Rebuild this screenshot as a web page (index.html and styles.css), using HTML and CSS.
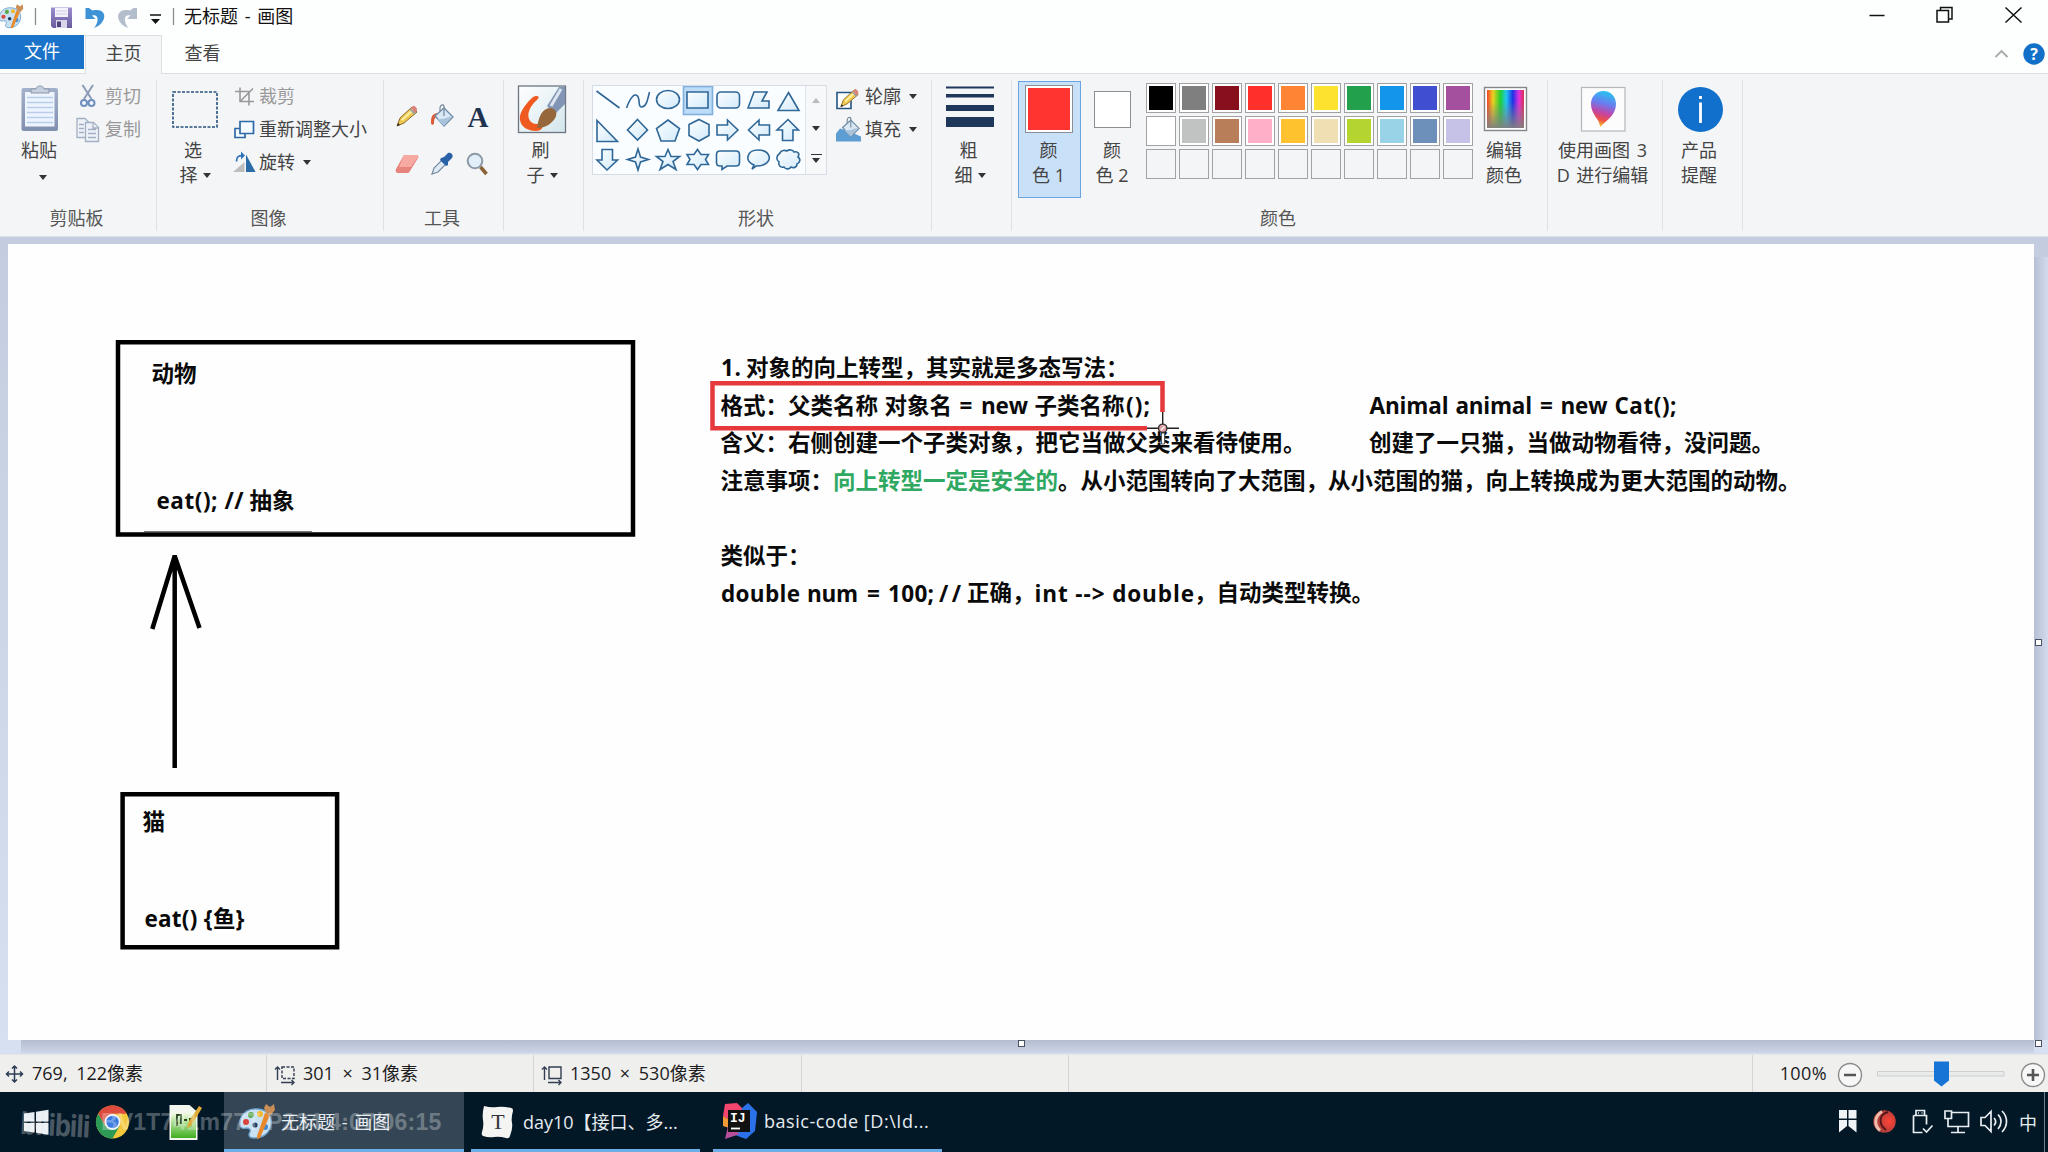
FILE: index.html
```html
<!DOCTYPE html>
<html lang="zh-CN">
<head>
<meta charset="utf-8">
<title>无标题 - 画图</title>
<link rel="stylesheet" href="styles.css">
</head>
<body>
<svg width="0" height="0" class="defs" aria-hidden="true">
  <defs>
    <linearGradient id="shapeFill" x1="0" y1="0" x2="1" y2="1"><stop offset="0" stop-color="#fbfeff"/><stop offset="1" stop-color="#d3eafa"/></linearGradient>
    <linearGradient id="board" x1="0" y1="0" x2="0" y2="1"><stop offset="0" stop-color="#a3b1cb"/><stop offset="1" stop-color="#7f8fae"/></linearGradient>
    <linearGradient id="rainbow"><stop offset="0" stop-color="#f0402c"/><stop offset=".16" stop-color="#f0d020"/><stop offset=".36" stop-color="#20d030"/><stop offset=".52" stop-color="#20c8f0"/><stop offset=".7" stop-color="#2030e8"/><stop offset=".86" stop-color="#e030e0"/><stop offset="1" stop-color="#e03050"/></linearGradient>
    <linearGradient id="toGray" x1="0" y1="0" x2="0" y2="1"><stop offset=".3" stop-color="#808080" stop-opacity="0"/><stop offset="1" stop-color="#808080" stop-opacity=".95"/></linearGradient>
    <linearGradient id="drop" x1=".6" y1="0" x2=".4" y2="1"><stop offset="0" stop-color="#25c5f0"/><stop offset=".35" stop-color="#6a7cf0"/><stop offset=".6" stop-color="#c046a8"/><stop offset=".8" stop-color="#ee4f4a"/><stop offset="1" stop-color="#f8c828"/></linearGradient>
    <linearGradient id="save" x1="0" y1="0" x2="0" y2="1"><stop offset="0" stop-color="#9b8fd0"/><stop offset="1" stop-color="#6a5a9c"/></linearGradient>
    <linearGradient id="npp" x1="0" y1="0" x2="0" y2="1"><stop offset="0" stop-color="#f2fbe0"/><stop offset="1" stop-color="#3fae1e"/></linearGradient>
    <linearGradient id="brushBg" x1="0" y1="0" x2="1" y2="1"><stop offset="0" stop-color="#fff"/><stop offset="1" stop-color="#d2e6ec"/></linearGradient>
    <radialGradient id="ball" cx=".7" cy=".5"><stop offset="0" stop-color="#ff4236"/><stop offset="1" stop-color="#b04038"/></radialGradient>
    <symbol id="palette" viewBox="0 0 38 38">
      <path d="M2 23C1 12 10 6 20 7c10 1 14 8 13 15-1 9-8 14-17 14-5 0-6-3-4-6 1-3-1-4-4-4-3 1-6 0-6-3z" fill="#c9e1f3" stroke="#6ea4cf" stroke-width="1.3"/>
      <circle cx="8" cy="20" r="3" fill="#d9453c"/><circle cx="13" cy="13" r="3" fill="#5aa749"/><circle cx="22" cy="12" r="3" fill="#f2b630"/><circle cx="17" cy="23" r="2.6" fill="#1e3c62"/><circle cx="27" cy="25" r="3" fill="#3f88d6"/>
      <path d="M27 11l5 2-10 23-3 1 0-3z" fill="#e8892c"/><path d="M28 2l4 3 4-3 1 6-4 5-5-2-2-5z" fill="#c98d55"/>
    </symbol>
    <symbol id="pencil" viewBox="0 0 24 24">
      <path d="M2 22l3-8L17 3l5 5L9 19z" fill="#efc94f" stroke="#8a6a34" stroke-width="1"/><path d="M7 16L19 5" stroke="#fff0a8" stroke-width="2"/><path d="M16 4l2-2c1-1 5 3 4 4l-2 3z" fill="#d9807a"/><path d="M15 5l5 5" stroke="#8d9bab" stroke-width="1.6"/><path d="M2 22l1-3 2 2z" fill="#222"/>
    </symbol>
    <symbol id="bucket" viewBox="0 0 24 24">
      <path d="M5 12L14 4l9 9-9 9z" fill="#d9e8f4" stroke="#6f8ba6" stroke-width="1.3"/><path d="M13 15l9-3-8 10-7-7z" fill="#a9c3dc"/><path d="M14 12V2c-1-2-4-1-4 2v3" fill="none" stroke="#73879a" stroke-width="1.2"/>
    </symbol>
  </defs>
</svg>

<header class="titlebar">
  <svg class="quick" width="180" height="35" viewBox="0 0 180 35">
    <use href="#palette" x="-2" y="3" width="26" height="26"/>
    <path d="M35.500 8v17M173.500 8v17" stroke="#8c8c8c" stroke-width="1.300"/>
    <path d="M51 7.500h21V28H53l-2-2z" fill="url(#save)"/><path d="M55 8h13v9H55z" fill="#f4f3fa"/><path d="M56 11h11M56 14h11" stroke="#cfcbe4"/><path d="M56 20h11v8H56z" fill="#d9d6ea"/><path d="M57 21.500h4V27h-4z" fill="#51447e"/>
    <path d="M85.500 8v11h10l-3.500-3.500c6-2 8 5 2 12.500C108 23 108 7 92.500 10.500L89 8z" fill="#3d93d5"/>
    <path d="M137 8v11h-10l3.500-3.500c-6-2-8 5-2 12.500C114 23 115 7 130 10.500L133.500 8z" fill="#b3bdcc"/>
    <path d="M150 15h11" stroke="#111" stroke-width="1.500"/><path d="M151 19h9l-4.500 5z" fill="#111"/>
  </svg>
  <span class="title">无标题 - 画图</span>
  <svg class="winctl" width="200" height="35" viewBox="1848 0 200 35" fill="none" stroke="#111" stroke-width="1.500">
    <path d="M1869.500 15.500h15"/><path d="M1937 10.500h11.500V22H1937z"/><path d="M1940.500 10V7.500H1952V19h-3"/><path d="M2005.500 7.500l16 15M2021.500 7.500l-16 15"/>
  </svg>
</header>

<nav class="tabs">
  <span class="tab file">文件</span>
  <span class="tab home">主页</span>
  <span class="tab view">查看</span>
  <svg class="help" width="60" height="38" viewBox="1988 35 60 38"><path d="M1995.500 57l6-6 6 6" fill="none" stroke="#a9a9a9" stroke-width="1.800"/><circle cx="2034" cy="54" r="10.700" fill="#1370c8"/><text x="2034" y="60" text-anchor="middle" class="q">?</text></svg>
</nav>

<section class="ribbon">
  <div class="group g-clip">
    <div class="body">
      <div class="big">
        <svg width="44" height="58" viewBox="18 80 44 58"><rect x="22.500" y="88" width="36.500" height="43" rx="2" fill="url(#board)"/><path d="M26 92h29.500v34.500H26z" fill="#edf4fd"/><path d="M28 97.500h26M28 102.500h26M28 107.500h26M28 112.500h26M28 117.500h26M28 122.500h26" stroke="#b9cdea" stroke-width="1.300"/><path d="M32 93v-4h5c0-4 8-4 8 0h5v4z" fill="#c6cfdb" stroke="#8b98ae"/></svg>
        <span>粘贴</span><i class="caret"></i>
      </div>
      <div class="col">
        <div class="row off"><svg width="29" height="33" viewBox="76 80.500 29 33"><path d="M82.500 85.500l9 14M93 85.500l-9 14" stroke="#8a9cb8" stroke-width="2"/><circle cx="84" cy="103.500" r="3" fill="none" stroke="#6f8fc0" stroke-width="2"/><circle cx="91.500" cy="103.500" r="3" fill="none" stroke="#6f8fc0" stroke-width="2"/></svg>剪切</div>
        <div class="row off"><svg width="29" height="33" viewBox="76 113.500 29 33" fill="#eef2f8" stroke="#a3b0c4" stroke-width="1.300"><path d="M77 119h8l4 4v15H77z"/><path d="M79 125h5M79 129h5M79 133h5"/><path d="M85.500 123h8l5 5v14h-13z"/><path d="M88 130h8M88 134h8M88 138h8M93 123.500v5h5"/></svg>复制</div>
      </div>
    </div>
    <div class="label">剪贴板</div>
  </div>

  <div class="group g-image">
    <div class="body">
      <div class="big">
        <svg width="50" height="58" viewBox="170.500 80 50 58"><path d="M173.500 92h44v35h-44z" fill="none" stroke="#26507e" stroke-width="1.600" stroke-dasharray="3 1.500"/></svg>
        <span>选</span><span>择<i class="caret"></i></span>
      </div>
      <div class="col">
        <div class="row off"><svg width="27" height="33" viewBox="232 80.500 27 33" fill="none" stroke="#999" stroke-width="1.600"><path d="M235 92h14v14M240 88v14h14M240 102l13-13"/></svg>裁剪</div>
        <div class="row"><svg width="27" height="33" viewBox="232 113.500 27 33" fill="#f4faff" stroke="#2d69a5" stroke-width="1.700"><path d="M235 129h10v9h-10z"/><path d="M240 122h13.500v12H240z"/></svg>重新调整大小</div>
        <div class="row"><svg width="27" height="33" viewBox="232 146.500 27 33"><path d="M233 172.500h11.500v-10z" fill="#bdbdbd"/><path d="M246 172.500h9.500L246 155z" fill="#2b6ca8"/><path d="M236.500 162c0-5 2-6 6-6" fill="none" stroke="#2f74bb" stroke-width="1.800"/><path d="M241 152l4 4-4 4z" fill="#2f74bb"/></svg>旋转<i class="caret"></i></div>
      </div>
    </div>
    <div class="label">图像</div>
  </div>

  <div class="group g-tools">
    <div class="toolgrid">
      <svg viewBox="0 0 24 24"><use href="#pencil"/></svg>
      <svg viewBox="0 0 24 24"><path d="M1 19c0-6 1-9 6-10l2 2-4 3c-1 2-1 4-1 6-1 1-3 1-3-1z" fill="#dd5a38"/><use href="#bucket"/></svg>
      <svg viewBox="0 0 24 24"><text x="13" y="22.500" text-anchor="middle" class="bigA">A</text></svg>
      <svg viewBox="0 0 24 24"><path d="M1 17L9 3h12c2 0 3 1 2 3l-8 13c-1 2-2 2-3 2H3c-2 0-3-2-2-4z" fill="#e5837c"/><path d="M9 3h12c2 0 2 1 2 2l-7 10H4z" fill="#f6aaa2"/></svg>
      <svg viewBox="0 0 24 24"><path d="M2 22l2-6 9-9 4 4-9 9z" fill="#dfeaf4" stroke="#778ba2" stroke-width="1.200"/><path d="M11 6l3-1 4-4c3-1 6 2 4 5l-4 4v3l-2 1-6-6z" fill="#2a62a8"/></svg>
      <svg viewBox="0 0 24 24"><circle cx="10" cy="9" r="7.300" fill="#e1effb" stroke="#8c98a6" stroke-width="2"/><path d="M15.500 15l6 7" stroke="#8a6237" stroke-width="3.500"/></svg>
    </div>
    <div class="label">工具</div>
  </div>

  <div class="group g-brush">
    <div class="body">
      <div class="big">
        <svg width="50" height="58" viewBox="517 80 50 58"><rect x="518.500" y="86" width="47" height="46.500" fill="url(#brushBg)" stroke="#6d7680" stroke-width="1.300"/><path d="M537 96c-4 0-5 2-9 6-5 6-9 12-8 18 1 7 8 11 16 11 6 0 8-4 5-8-4 2-10 1-12-4-2-6 1-13 8-19l2-3z" fill="#ef5a20"/><path d="M547 106l12-19h6v17l-10 10z" fill="#8295b4"/><path d="M551 106l10-17" stroke="#dce5f0" stroke-width="3"/><path d="M537 128c2-12 5-20 14-20 7 1 7 9 1 14-4 4-9 6-15 6z" fill="#95673a"/></svg>
        <span>刷</span><span>子<i class="caret"></i></span>
      </div>
    </div>
    <div class="label"></div>
  </div>

  <div class="group g-shapes">
    <div class="body">
      <div class="gallery">
        <svg width="212" height="88" viewBox="593 86 212 88" fill="url(#shapeFill)" stroke="#2f6797" stroke-width="1.600">
          <rect x="683.500" y="86.500" width="29" height="28" fill="#bcdcf8" stroke="#7fb0de"/>
          <path d="M596.500 91l23 17"/><path fill="none" d="M626.500 108c4-11 8-15 11-12 3 3 0 11 4 11 5 0 6-7 8-15"/>
          <ellipse cx="668" cy="99.500" rx="11.500" ry="9"/><path d="M687 92h21v16h-21z"/><rect x="717" y="92" width="22.500" height="16" rx="4"/><path d="M748 108l6-16h13l-5 9h7v7z"/><path d="M788.500 92.500l10.500 18h-21z"/>
          <path d="M597 120.500v21h20.500z"/><path d="M637.500 119.500l10 10.500-10 10-10-10z"/><path d="M668 120l11.500 8.500-4.500 12.500h-14l-4.500-12.500z"/><path d="M699 119.500l10 5v11l-10 5.500-10-5.500v-11z"/><path d="M717 125h10.500v-5L738 130l-10.500 10v-5H717z"/><path d="M769.500 125H759v-5l-10.500 10L759 140v-5h10.500z"/><path d="M788 119.500l10.500 10.500H793v10.500h-10.500V130H777z"/>
          <path d="M602 149.500h10.500V160h5L607 170l-10-10h5z"/><path d="M638 149l2.500 8 8 2.500-8 2.500-2.500 8-2.500-8-8-2.500 8-2.500z"/><path d="M668 149.500l3 7h8.500l-6.500 5 3 8-8-5-8 5 3-8-6.500-5h8.500z"/><path d="M697.500 149.500l3.500 5h7.500l-3 5 3 5H701l-3.500 5-3.500-5h-7l3-5-3-5h7z"/>
          <path d="M720 151h16q3.500 0 3.500 3.500v8q0 3.500-3.500 3.500h-9l-5 3.500V166h-2q-3.500 0-3.500-3.500v-8q0-3.500 3.500-3.500z"/><path d="M754 165c-10-4-7-15 4-15s15 9 7 14c-3 2-6 2-9 2l-4 3z"/>
          <path d="M780 153c1-3 5-3 7-2 2-2 6-1 7 1 4-1 6 2 4 5 3 2 2 6-1 7 0 4-4 4-6 3-2 3-6 2-7 0-4 1-6-2-5-5-3-2-3-6 1-9z"/>
        </svg>
        <div class="scroll"><i class="up"></i><i class="caret"></i><i class="more"></i></div>
      </div>
      <div class="col">
        <div class="row"><svg width="29" height="33" viewBox="836 80.500 29 33"><path d="M837 93h14v16h-14z" fill="#fff" stroke="#245482" stroke-width="1.600"/><use href="#pencil" x="839" y="88" width="21" height="21"/></svg>轮廓<i class="caret"></i></div>
        <div class="row"><svg width="29" height="33" viewBox="836 113.500 29 33"><path d="M836 142v-8l4-5 6 2 8 3 7 3v5z" fill="#5c9dd3"/><use href="#bucket" x="838" y="117" width="22" height="22"/></svg>填充<i class="caret"></i></div>
      </div>
    </div>
    <div class="label">形状</div>
  </div>

  <div class="group g-size">
    <div class="body">
      <div class="big">
        <svg width="50" height="58" viewBox="945 80 50 58" fill="#20375c"><path d="M946 86.500h48v2h-48zM946 94h48v3.500h-48zM946 105h48v6h-48zM946 117h48v10h-48z"/></svg>
        <span>粗</span><span>细<i class="caret"></i></span>
      </div>
    </div>
    <div class="label"></div>
  </div>

  <div class="group g-color">
    <div class="body">
      <div class="big color1"><div class="chip"><b></b></div><span>颜</span><span>色 1</span></div>
      <div class="big color2"><div class="chip"><b></b></div><span>颜</span><span>色 2</span></div>
      <div class="palette">
        <i class="k1"></i><i class="k2"></i><i class="k3"></i><i class="k4"></i><i class="k5"></i><i class="k6"></i><i class="k7"></i><i class="k8"></i><i class="k9"></i><i class="k10"></i>
        <i class="k11"></i><i class="k12"></i><i class="k13"></i><i class="k14"></i><i class="k15"></i><i class="k16"></i><i class="k17"></i><i class="k18"></i><i class="k19"></i><i class="k20"></i>
        <i class="none"></i><i class="none"></i><i class="none"></i><i class="none"></i><i class="none"></i><i class="none"></i><i class="none"></i><i class="none"></i><i class="none"></i><i class="none"></i>
      </div>
      <div class="big edit">
        <svg width="46" height="58" viewBox="1482 80 46 58"><rect x="1484.500" y="87.500" width="42" height="43" fill="#fff" stroke="#858585" stroke-width="1.400"/><path d="M1487 90h37v38h-37z" fill="url(#rainbow)"/><path d="M1487 90h37v38h-37z" fill="url(#toGray)"/></svg>
        <span>编辑</span><span>颜色</span>
      </div>
    </div>
    <div class="label">颜色</div>
  </div>

  <div class="group g-3d">
    <div class="body">
      <div class="big">
        <svg width="46" height="58" viewBox="1580 80 46 58"><rect x="1581.500" y="87.500" width="43.500" height="43.500" fill="#fcfcfd" stroke="#b4b6ba" stroke-width="1.200"/><path d="M1600 127c0-8-9-12-9-23 0-7 5-13 12.500-13s12.500 6 12.500 13c0 11-9 16-16 23z" fill="url(#drop)"/></svg>
        <span>使用画图 3</span><span>D 进行编辑</span>
      </div>
    </div>
    <div class="label"></div>
  </div>

  <div class="group g-info">
    <div class="body">
      <div class="big">
        <svg width="48" height="58" viewBox="1676.500 80 48 58"><circle cx="1701" cy="109.500" r="22.500" fill="#1170cc"/><path d="M1701 102.500v20.500M1701 96v3" stroke="#fff" stroke-width="2.800"/></svg>
        <span>产品</span><span>提醒</span>
      </div>
    </div>
    <div class="label"></div>
  </div>
</section>

<main class="workarea">
  <div class="paper">
    <svg width="2026" height="796" viewBox="8 244 2026 796" class="drawing">
      <g fill="none" stroke="#000" stroke-width="4.500">
        <path d="M118 342.300h515v192.200H118z"/><path d="M122.600 794.300h214.500v153H122.600z"/>
        <path d="M174.700 555v213M152.300 629l22.400-73M199.500 628l-24.800-72"/>
      </g>
      <path d="M144 531.500h168" stroke="#777" stroke-width="1"/>
      <text x="151.500" y="382">动物</text>
      <text x="156.500" y="508.500" textLength="87">eat(); //</text><text x="249.500" y="508.500">抽象</text>
      <text x="142.500" y="830">猫</text>
      <text x="144.500" y="927" textLength="68">eat() {</text><text x="213" y="927">鱼</text><text x="235.500" y="927">}</text>

      <text x="721" y="376" textLength="20">1.</text><text x="746" y="376">对象的向上转型，其实就是多态写法：</text>
      <text x="720.500" y="413.500">格式：父类名称</text><text x="884.500" y="413.500">对象名</text><text x="959.500" y="414" textLength="15">=</text><text x="981" y="414" textLength="47">new</text><text x="1034.500" y="413.500">子类名称</text><text x="1126" y="414" textLength="24">();</text>
      <text x="720.500" y="451">含义：右侧创建一个子类对象，把它当做父类来看待使用。</text>
      <text x="720.500" y="488.500">注意事项：<tspan class="green">向上转型一定是安全的</tspan>。从小范围转向了大范围，从小范围的猫，向上转换成为更大范围的动物。</text>
      <text x="720.500" y="563.500">类似于：</text>
      <text x="721" y="601.500" textLength="79">double</text><text x="807" y="601.500" textLength="51">num</text><text x="867" y="601.500" textLength="13">=</text><text x="888" y="601.500" textLength="46">100;</text><text x="939" y="601.500" textLength="22">//</text><text x="967" y="601">正确，</text><text x="1034.500" y="601.500" textLength="159.500">int --&gt; double</text><text x="1194" y="601">，自动类型转换。</text>
      <text x="1369.500" y="414" textLength="79">Animal</text><text x="1455.500" y="414" textLength="76.500">animal</text><text x="1540" y="414" textLength="13">=</text><text x="1560.500" y="414" textLength="47">new</text><text x="1614.500" y="414" textLength="62">Cat();</text>
      <text x="1369" y="451">创建了一只猫，当做动物看待，没问题。</text>

      <path d="M1147 428.300H712.500V383.300h450V412" fill="none" stroke="#e5393c" stroke-width="4.500"/>
      <path d="M1162.700 412v12M1147 428.300h11M1167 428.300h12" stroke="#222" stroke-width="1.400"/>
      <path d="M1161.500 433v11h3v-11z" fill="#fff" stroke="#555" stroke-width="1"/>
      <circle cx="1162.700" cy="428.300" r="4.200" fill="#e0a0a6" stroke="#333" stroke-width="1.400"/><path d="M1161 430l3.500-3.500" stroke="#fff" stroke-width="1.300"/>
    </svg>
  </div>
  <i class="shade-right"></i><i class="shade-bottom"></i>
  <i class="handle h-right"></i><i class="handle h-bottom"></i><i class="handle h-corner"></i>
</main>

<footer class="status">
  <div class="cell s1"><svg width="20" height="38" viewBox="4 1054 20 38" fill="none" stroke="#2b3b55" stroke-width="1.500"><path d="M6.500 1073h16M14.500 1065v16M9 1070.500l-2.500 2.500 2.500 2.500M20 1070.500l2.500 2.500-2.500 2.500M12 1067.500l2.500-2.500 2.500 2.500M12 1078.500l2.500 2.500 2.500-2.500"/></svg><span>769, 122像素</span></div>
  <div class="cell s2"><svg width="22" height="38" viewBox="274 1054 22 38" fill="none" stroke="#333f52" stroke-width="1.400"><path d="M277.500 1079v-13M275 1068.500l2.500-2.500 2.500 2.500M281 1081.500h13M291.500 1079l2.500 2.500-2.500 2.500"/><path d="M282 1066h12v11.500h-12z" stroke-dasharray="3 1.500"/></svg><span>301 × 31像素</span></div>
  <div class="cell s3"><svg width="22" height="38" viewBox="541 1054 22 38" fill="none" stroke="#333f52" stroke-width="1.400"><path d="M544.500 1079v-13M542 1068.500l2.500-2.500 2.500 2.500M548 1081.500h13M558.500 1079l2.500 2.500-2.500 2.500"/><path d="M549 1066h12v11.500h-12z"/></svg><span>1350 × 530像素</span></div>
  <div class="cell s4"></div>
  <div class="cell s5"></div>
  <div class="zoom"><span>100%</span>
    <svg width="215" height="38" viewBox="1833 1054 215 38"><g fill="#f7f7f7" stroke="#8b8b8b" stroke-width="1.400"><circle cx="1850" cy="1074" r="11.500"/><circle cx="2033" cy="1074" r="11.500"/></g><path d="M1844 1074h12M2027 1074h12M2033 1068v12" stroke="#555" stroke-width="2.600"/><path d="M1877.500 1070.500h126.500v4.500h-126.500z" fill="#e9eaea" stroke="#cdcfd0"/><path d="M1934 1060.500h15v19l-7.500 6-7.500-6z" fill="#1674d6"/></svg>
  </div>
</footer>

<div class="taskbar">
  <div class="pins">
    <svg width="224" height="60" viewBox="0 1092 224 60">
      <path d="M24 1113.500l10.500-1.600v9.600H24zM36 1111.700l12.500-2v11.800H36zM24 1123h10.500v9.600L24 1131zM36 1123h12.500v11.700l-12.500-2z" fill="#e9eef2"/>
      <circle cx="112.500" cy="1122" r="16.500" fill="#f3c83a"/><path d="M98.200 1113.700A16.500 16.500 0 0 1 126.800 1113.700H112.500L105.300 1126z" fill="#dd4b3e"/><path d="M98.200 1113.700A16.500 16.500 0 0 0 112.500 1138.500L119.700 1126H105.300z" fill="#2d9a55"/><circle cx="112.500" cy="1122" r="8" fill="#f1f3f5"/><circle cx="112.500" cy="1122" r="6.200" fill="#3a7be0"/>
      <path d="M169.500 1105h20l8 7v28h-28z" fill="#f3f6ee"/><path d="M171 1113h25v25h-25z" fill="url(#npp)"/><path d="M177 1126v-11h4v9M184 1120h3M190 1118v4" stroke="#264218" stroke-width="1.800" fill="none"/><path d="M187 1128l2-7 10-15 3 2-11 18z" fill="#e0ab35"/>
    </svg>
  </div>
  <div class="task active"><svg width="38" height="38"><use href="#palette" width="38" height="38"/></svg><span>无标题 - 画图</span></div>
  <div class="task t2"><svg width="36" height="38" viewBox="0 0 36 38"><path d="M3 4q7 2 13 1t14 1q2 0 2 3-2 7-1 12t-2 13q-1 3-4 2-7-2-12-1t-11-1q-2-1-1-4 2-6 1-12t1-14z" fill="#f4f4f3"/><text x="17" y="27" text-anchor="middle" class="typ">T</text></svg><span>day10【接口、多...</span></div>
  <div class="task t3"><svg width="38" height="38" viewBox="0 0 38 38"><path d="M4 2l12-1 7 7-9 14-12-8z" fill="#f3456e"/><path d="M21 6l6-5 9 9-2 19-9 8-11-4z" fill="#2b72ea"/><path d="M2 14l8 5 1 8-9-3z" fill="#f19a35"/><path d="M4 37l3-13 12 8z" fill="#b74f9d"/><path d="M7 8h22v22H7z" fill="#111"/><text x="9" y="20" class="ij">IJ</text><path d="M10 26.500h9" stroke="#fff" stroke-width="1.800"/></svg><span>basic-code [D:\Id...</span></div>
  <div class="tray">
    <svg width="180" height="60" viewBox="1832 1092 180 60" fill="none" stroke="#e8edf2" stroke-width="1.700">
      <path d="M1839 1110h8v8.500h-8zM1848.500 1110h8v8.500h-8zM1839 1120h8v6l-8 6.500zM1848.500 1120h8v12.500l-8-6.500z" fill="#f0f3f5" stroke="none"/>
      <circle cx="1884.500" cy="1121.500" r="11.200" fill="url(#ball)" stroke="none"/><path d="M1888 1112c-9 2-10 12-2 18" stroke="#54161a" stroke-width="1.800"/><path d="M1882 1111.500c-8 5-8 14-2 19" stroke="#f0bcae" stroke-width="3"/>
      <path d="M1916 1115v-4.500h8.500v4.500M1913.500 1115.500h13v9M1913.500 1115.500v17h9M1918 1113h1M1921.500 1113h1M1923 1128.500l3.500 3.500 6-6.500"/>
      <path d="M1952 1112.500h16.500v14H1948v-6M1958 1127v5M1951 1132.500h14M1945 1111h6.500v7.500h-6.500zM1948 1118v3"/>
      <path d="M1981 1117.500h4l6-6v20l-6-6h-4zM1994 1118c2 2 2 5 0 7.500M1998 1114.500c4 4 4 10 0 14.500M2002 1111c6 6 6 15 0 21"/>
    </svg>
    <span class="ime">中</span><i class="desk"></i>
  </div>
  <div class="watermark"><span class="logo">bilibili</span><span class="code">BV1T741m77T P234 4:07/06:15</span></div>
</div>
</body>
</html>
```

FILE: styles.css
```css
* { box-sizing: border-box; }
body { margin: 0; width: 2048px; height: 1152px; overflow: hidden; display: flex; flex-direction: column; background: #fdfefe; color: #444; font: 18px "Open Sans", "Noto Sans CJK SC", sans-serif; }
svg { display: block; flex: none; }
i { font-style: normal; }
.defs { position: absolute; }

.titlebar { height: 35px; flex: none; display: flex; align-items: center; }
.title { margin-left: 4px; color: #111; line-height: 32px; padding-bottom: 3px; white-space: nowrap; word-spacing: 2px; }
.winctl { margin-left: auto; }

.tabs { height: 39px; flex: none; display: flex; border-bottom: 1px solid #dcdee0; line-height: 34px; }
.tab { height: 39px; text-align: center; }
.file { width: 84px; height: 34px; background: #1a73c9; color: #fff; line-height: 33px; }
.home { width: 77px; margin-left: 1px; background: #f5f6f7; border: 1px solid #dcdee0; border-bottom: 0; line-height: 34px; }
.view { width: 81px; line-height: 36px; }
.help { margin-left: auto; }
.q { font: bold 16px "Open Sans", sans-serif; fill: #fff; }

.ribbon { height: 163px; flex: none; display: flex; background: #f4f5f7; border-bottom: 1px solid #dfe2e8; }
.group { margin: 6px 0 6px; height: 151px; border-right: 1px solid #dfe1e4; display: flex; flex-direction: column; justify-content: space-between; }
.body { display: flex; height: 120px; }
.label { height: 26px; line-height: 26px; text-align: center; color: #555; padding-right: 3px; }
.big { display: flex; flex-direction: column; align-items: center; white-space: nowrap; line-height: 25px; }
.big span { height: 25px; display: flex; align-items: center; gap: 5px; white-space: pre; }
.row { height: 33px; line-height: 33px; display: flex; align-items: center; white-space: nowrap; }
.row .caret { margin-left: 8px; }
.off { color: #999; }
.caret { width: 0; height: 0; flex: none; border: 4px solid transparent; border-top: 5px solid #333; border-bottom: 0; }

.g-clip { width: 157px; }
.g-clip .body { padding-left: 17px; }
.g-clip .big > .caret { margin: 12px 0 0 8px; }
.g-clip .col { margin-left: 15px; }
.g-image { width: 227px; }
.g-image .body { padding-left: 13px; }
.g-image .big { width: 50px; }
.g-image .big span:nth-of-type(1) { margin-right: 4px; }
.g-image .col { margin-left: 12px; }
.g-tools { width: 120px; }
.toolgrid { display: grid; grid-template-columns: repeat(3, 24px); gap: 24px 11px; padding: 24px 0 0 11px; }
.toolgrid svg { overflow: visible; }
.bigA { font: bold 29px "Liberation Serif", serif; fill: #1f3350; }
.g-brush { width: 80px; }
.g-brush .body { padding-left: 13px; }
.g-brush .big span:nth-of-type(1), .g-size .big span:nth-of-type(1) { margin-right: 3px; }
.g-shapes { width: 348px; }
.g-shapes .body { padding-left: 8px; }
.gallery { display: flex; width: 235px; height: 90px; margin-top: 5px; border: 1px solid #d5dce5; background: #fafdff; }
.scroll { width: 21px; border-left: 1px solid #e0e4ea; background: #f7f8fa; display: flex; flex-direction: column; align-items: center; justify-content: space-between; padding: 12px 0 11px; }
.up { border: 4px solid transparent; border-top: 0; border-bottom: 5px solid #bbb; }
.more { width: 11px; height: 9px; border-top: 1.500px solid #333; display: flex; justify-content: center; align-items: end; }
.more::after { content: ""; border: 4.500px solid transparent; border-top: 5px solid #333; border-bottom: 0; }
.g-shapes .col { margin-left: 9px; }
.g-size { width: 80px; }
.g-size .body { padding-left: 13px; }

.g-color { width: 536px; }
.g-color .body { padding-left: 6px; }
.color1 { width: 63px; height: 117px; margin-top: 1px; border: 1px solid #6aa5e2; background: #c9e0f9; padding: 3px 2px 0 0; }
.chip { border: 1px solid #8b8f94; background: #fff; padding: 2px; display: flex; }
.chip b { flex: 1; }
.color1 .chip { width: 48px; height: 48px; margin-bottom: 5px; }
.color1 .chip b { background: #ff332f; }
.color2 { width: 63px; padding-right: 1px; }
.color2 .chip { width: 37px; height: 37px; margin: 11px 0 10px; }
.palette { margin-top: 3px; display: grid; grid-template-columns: repeat(10, 30px); grid-auto-rows: 30px; gap: 3px; height: 96px; margin-left: 2px; }
.palette i { border: 1.500px solid #a2a2a4; padding: 2px; background-clip: content-box; box-shadow: inset 0 0 0 2px #fff; }
.palette .none { box-shadow: none; }
.k1 { background-color: #000; } .k2 { background-color: #7f7f7f; } .k3 { background-color: #880f1c; } .k4 { background-color: #fd302c; } .k5 { background-color: #ff8433; }
.k6 { background-color: #fde32d; } .k7 { background-color: #22a04c; } .k8 { background-color: #1295ea; } .k9 { background-color: #404fd0; } .k10 { background-color: #a4509f; }
.k11 { background-color: #fff; } .k12 { background-color: #c1c3c3; } .k13 { background-color: #b87d59; } .k14 { background-color: #ffb0c8; } .k15 { background-color: #ffc22f; }
.k16 { background-color: #efdfb2; } .k17 { background-color: #b4d42f; } .k18 { background-color: #98d3e8; } .k19 { background-color: #6c90ba; } .k20 { background-color: #c5c1e7; }
.edit { margin-left: 9px; }
.edit span { margin-right: 2px; }
.g-3d { width: 115px; }
.g-3d .body, .g-info .body { justify-content: center; }
.g-3d .body { padding-right: 5px; word-spacing: 2px; }
.g-info { width: 80px; }
.g-info .body { padding-right: 5px; }
.g-info .big span { margin-right: 2px; }

.workarea { flex: 1; position: relative; padding: 7px 0 0 8px; background: linear-gradient(#c4ccdf, #d7e0f0); }
.paper { width: 2026px; height: 796px; background: #fdfefd; }
.drawing text { font: 700 22.500px "Open Sans", "Noto Sans CJK SC", sans-serif; fill: #0a0a0a; }
.drawing .green { fill: #2fa862; }
.shade-right { position: absolute; left: 2034px; top: 20px; width: 14px; height: 783px; background: linear-gradient(90deg, #b6bfd4, #d3dcee); }
.shade-bottom { position: absolute; left: 21px; top: 803px; width: 2013px; height: 13px; background: linear-gradient(#b4bccf, #cdd6e7); }
.handle { position: absolute; width: 7px; height: 7px; border: 1.500px solid #4b5361; background: #fff; }
.h-right { left: 2035px; top: 402px; }
.h-bottom { left: 1018px; top: 803px; }
.h-corner { left: 2035px; top: 803px; }

.status { height: 38px; flex: none; display: flex; background: #efefee; border-top: 1px solid #e2e4e8; color: #1d1d1d; line-height: 37px; white-space: nowrap; word-spacing: 4px; }
.cell { display: flex; align-items: center; border-right: 1px solid #d5d5d5; }
.s1 { width: 267px; padding-left: 4px; gap: 8px; }
.s2 { width: 267px; padding-left: 7px; gap: 7px; }
.s3 { width: 268px; padding-left: 7px; gap: 7px; }
.s4 { width: 267px; }
.s5 { width: 684px; }
.zoom { display: flex; flex: 1; justify-content: flex-end; align-items: center; gap: 6px; letter-spacing: .4px; }

.taskbar { height: 60px; flex: none; position: relative; display: flex; background: #021827; color: #e6ebf0; white-space: nowrap; }
.task { display: flex; align-items: center; height: 60px; border-bottom: 3px solid #6caee8; padding-left: 10px; }
.task.active { width: 240px; background: #344655; padding-left: 14px; gap: 5px; word-spacing: 2px; }
.t2 { width: 229px; margin-left: 7px; gap: 6px; }
.t3 { width: 229px; margin-left: 13px; padding-left: 8px; gap: 5px; letter-spacing: .55px; }
.typ { font: 22px "Liberation Serif", serif; fill: #333; }
.ij { font: bold 13px "Liberation Mono", monospace; fill: #fff; letter-spacing: 0; }
.tray { margin-left: auto; display: flex; align-items: center; }
.ime { margin-left: 7px; width: 20px; }
.desk { margin-left: 5px; width: 4px; height: 60px; border-left: 1px solid #72808b; }
.watermark { position: absolute; left: 20px; top: 8px; display: flex; align-items: center; gap: 9px; color: rgba(255, 255, 255, .3); height: 44px; }
.logo { font: bold 30px "Open Sans", sans-serif; letter-spacing: -1.800px; width: 72px; transform: rotate(3deg) scaleX(.88); transform-origin: left; }
.code { font: bold 23px "Liberation Sans", sans-serif; letter-spacing: .2px; }
```
